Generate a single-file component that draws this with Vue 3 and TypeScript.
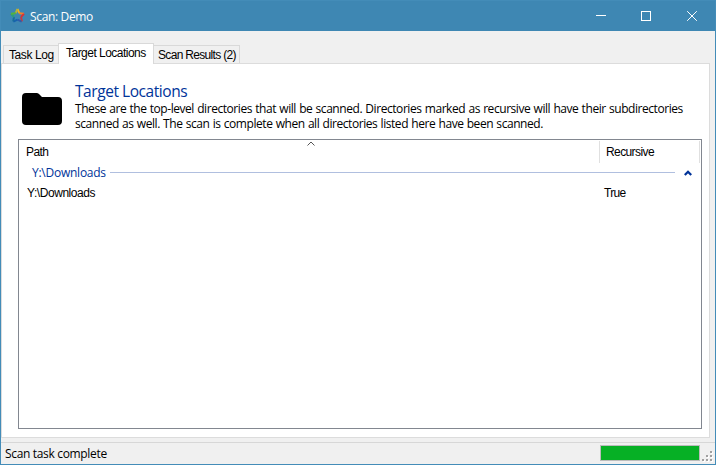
<script setup lang="ts">
import { ref } from 'vue'

interface Location {
  path: string
  recursive: boolean
}

const tabs = ['Task Log', 'Target Locations', 'Scan Results (2)']
const active = ref(1)
const locations: Location[] = [{ path: 'Y:\\Downloads', recursive: true }]
const description = [
  'These are the top-level directories that will be scanned. Directories marked as recursive will have their subdirectories',
  'scanned as well. The scan is complete when all directories listed here have been scanned.',
]
const gripDots = [[8, 0], [4, 4], [8, 4], [0, 8], [4, 8], [8, 8]]
</script>

<template>
  <div class="window">
    <header class="titlebar">
      <svg class="logo" width="15" height="15" viewBox="0 0 15 15">
        <g fill="none" stroke-width="1.9">
          <path d="M7.5 1 9.4 5.2" stroke="#f6b21a" />
          <path d="M7.5 1 5.6 5.2" stroke="#b5b53a" />
          <path d="M9.2 5.3 14 5.8" stroke="#f0812b" />
          <path d="M14 5.8 11 9" stroke="#d93236" />
          <path d="M11 9 12 13.4" stroke="#c93a3d" />
          <path d="M11.6 13.6 7.5 11.6" stroke="#315baa" />
          <path d="M7.5 11.6 3.4 13.6" stroke="#1862ae" />
          <path d="M3.2 13.4 4 9" stroke="#176d9d" />
          <path d="M4 9 1 5.8" stroke="#2c9e78" />
          <path d="M1 5.8 5.8 5.3" stroke="#55b33b" />
        </g>
      </svg>
      <span class="caption">Scan: Demo</span>
      <button class="control minimize" aria-label="Minimize">
        <svg width="10" height="10" viewBox="0 0 10 10" shape-rendering="crispEdges"><path d="M0 4.5H10" /></svg>
      </button>
      <button class="control" aria-label="Maximize">
        <svg width="10" height="10" viewBox="0 0 10 10" shape-rendering="crispEdges"><path d="M.5.5h9v9h-9z" /></svg>
      </button>
      <button class="control" aria-label="Close">
        <svg width="10" height="10" viewBox="0 0 10 10"><path d="M.2.2 9.8 9.8M9.8.2.2 9.8" /></svg>
      </button>
    </header>

    <nav class="tabs">
      <button v-for="(tab, i) in tabs" :key="tab" class="tab" :class="['tab-' + i, { active: active === i }]" @click="active = i">
        {{ tab }}
      </button>
    </nav>

    <main class="page">
      <section class="intro">
        <svg class="folder" width="40" height="32" viewBox="0 0 40 32">
          <path d="M4 0H14.5Q16 0 17 1L20 4H36Q40 4 40 8V28Q40 32 36 32H4Q0 32 0 28V4Q0 0 4 0Z" />
        </svg>
        <div class="copy">
          <h1>Target Locations</h1>
          <p v-for="(line, i) in description" :key="i">{{ line }}</p>
        </div>
      </section>

      <section class="list">
        <div class="head">
          <div class="col path">
            Path
            <svg class="sort" width="8" height="5" viewBox="0 0 8 5"><path d="M.5 4.5 4 1 7.5 4.5" /></svg>
          </div>
          <div class="col recursive">Recursive</div>
        </div>
        <div class="group">
          <span>Y:\Downloads</span>
          <i class="rule"></i>
          <svg width="8" height="6" viewBox="0 0 8 6"><path d="M.8 5 4 1.8 7.2 5" /></svg>
        </div>
        <div v-for="row in locations" :key="row.path" class="row">
          <span class="path">{{ row.path }}</span>
          <span class="flag">{{ row.recursive ? 'True' : 'False' }}</span>
        </div>
      </section>
    </main>

    <footer class="status">
      <span class="message">Scan task complete</span>
      <div class="progress"><div class="fill"></div></div>
      <svg class="grip" width="12" height="12" viewBox="0 0 12 12" shape-rendering="crispEdges">
        <g v-for="([x, y], i) in gripDots" :key="i">
          <rect :x="x + 1" :y="y + 1" width="2" height="2" fill="#fff" />
          <rect :x="x" :y="y" width="2" height="2" fill="#a0a0a0" />
        </g>
      </svg>
    </footer>
  </div>
</template>

<style>
body {
  margin: 0;
  overflow: hidden;
}
</style>

<style scoped>
.window {
  box-sizing: border-box;
  width: 716px;
  height: 465px;
  display: flex;
  flex-direction: column;
  border: 1px solid #438cb8;
  background: #f0f0f0;
  color: #000;
  font-family: "Open Sans", "Noto Sans", sans-serif;
  font-size: 12px;
  white-space: nowrap;
}
svg {
  flex: none;
}
button {
  border: 0;
  padding: 0;
  margin: 0;
  background: none;
  font: inherit;
  color: inherit;
}
.titlebar {
  height: 30px;
  flex: none;
  display: flex;
  align-items: center;
  padding-left: 9px;
  background: #3e87b3;
  color: #fff;
}
.logo {
  margin: 0 5px 2px 0;
}
.caption {
  flex: 1;
  letter-spacing: -0.35px;
}
.control {
  width: 46px;
  height: 30px;
  display: flex;
  align-items: center;
  justify-content: center;
}
.control.minimize {
  width: 44px;
}
.control path {
  fill: none;
  stroke: #fff;
  stroke-width: 1;
}
.tabs {
  height: 32px;
  flex: none;
  display: flex;
  align-items: flex-end;
  padding-left: 2px;
  font-family: "Liberation Sans", Arial, sans-serif;
}
.tab {
  box-sizing: border-box;
  height: 18px;
  border: 1px solid #d9d9d9;
  border-bottom: 0;
  line-height: 18px;
  text-align: left;
}
.tab-0 {
  width: 55px;
  border-right: 0;
  padding-left: 5px;
  letter-spacing: -0.4px;
}
.tab-1 {
  width: 96px;
  padding-left: 7px;
  letter-spacing: -0.52px;
}
.tab-2 {
  width: 86px;
  border-left: 0;
  padding-left: 4px;
  letter-spacing: -0.68px;
}
.tab.active {
  height: 21px;
  margin-bottom: -1px;
  background: #fff;
  z-index: 1;
  padding-bottom: 2px;
}
.page {
  box-sizing: border-box;
  width: 709px;
  height: 375px;
  flex: none;
  border: 1px solid #dcdcdc;
  background: #fff;
  padding: 18px 7px 8px 16px;
}
.intro {
  height: 57px;
  display: flex;
}
.folder {
  margin: 11px 13px 0 4px;
}
.copy h1 {
  margin: 0;
  color: #003399;
  font-size: 15.5px;
  font-weight: 400;
  line-height: 18px;
  letter-spacing: -0.44px;
}
.copy p {
  margin: 0;
  line-height: 15px;
  letter-spacing: -0.44px;
  word-spacing: 0.55px;
}
.copy h1 + p {
  margin-top: 1px;
}
.list {
  box-sizing: border-box;
  width: 684px;
  height: 290px;
  border: 1px solid #828790;
  font-family: "Liberation Sans", Arial, sans-serif;
}
.head {
  height: 24px;
  display: flex;
}
.col {
  position: relative;
  box-sizing: border-box;
  height: 22px;
  margin-top: 1px;
  border-right: 1px solid #e0e0e0;
  padding-left: 6px;
  line-height: 22px;
  letter-spacing: -0.6px;
}
.col.path {
  width: 581px;
  padding-left: 7px;
}
.col.recursive {
  width: 100px;
}
.sort {
  position: absolute;
  left: 288px;
  top: 0;
}
.sort path {
  fill: none;
  stroke: #555;
}
.group {
  height: 17px;
  display: flex;
  align-items: center;
  padding: 0 9px 0 13px;
  color: #003399;
  font-family: "Open Sans", "Noto Sans", sans-serif;
}
.group span {
  width: 74px;
  letter-spacing: -0.25px;
}
.rule {
  flex: 1;
  height: 1px;
  margin: 0 9px 0 4px;
  background: #b0bfdf;
}
.group path {
  fill: none;
  stroke: #003399;
  stroke-width: 2.3;
}
.row {
  height: 22px;
  display: flex;
  line-height: 22px;
  padding: 1px 0 0 8px;
}
.row .path {
  width: 577px;
  letter-spacing: -0.44px;
}
.flag {
  letter-spacing: -0.7px;
}
.status {
  height: 22px;
  flex: none;
  display: flex;
  margin-top: 4px;
  border-top: 1px solid #d7d7d7;
}
.message {
  flex: 1;
  padding-left: 4px;
  line-height: 22px;
  letter-spacing: -0.33px;
}
.progress {
  box-sizing: border-box;
  width: 100px;
  height: 16px;
  margin-top: 2px;
  border: 1px solid #bcbcbc;
}
.fill {
  height: 100%;
  background: #06b025;
}
.grip {
  margin: 8px 1px 0 2px;
}
</style>
